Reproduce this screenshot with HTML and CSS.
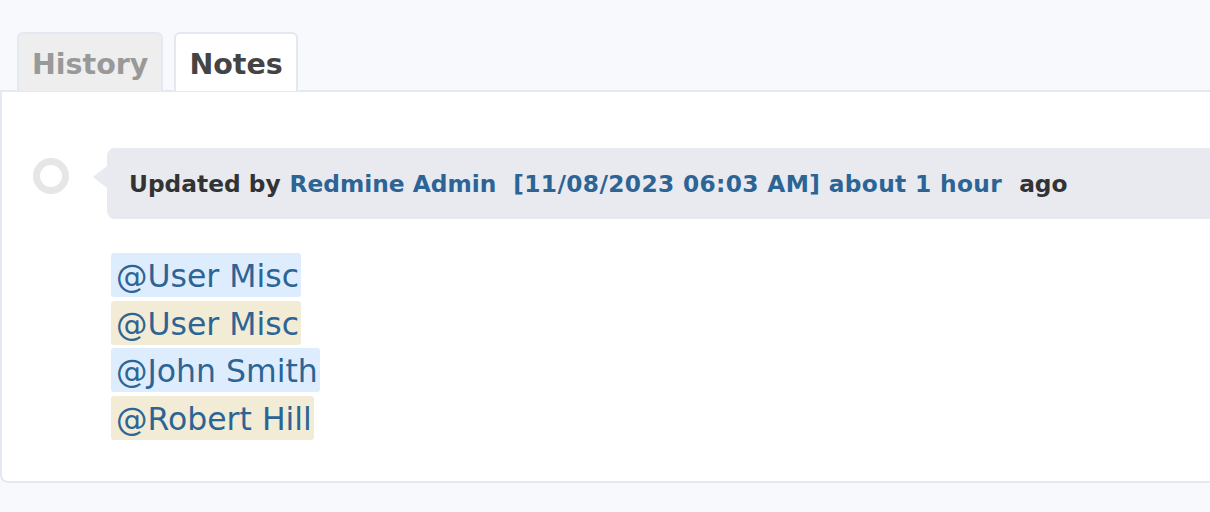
FILE: index.html
```html
<!DOCTYPE html>
<html>
<head>
<meta charset="utf-8">
<link rel="stylesheet" href="styles.css">
</head>
<body>
<div class="page">
  <ul class="tabs">
    <li class="tab">History</li>
    <li class="tab selected">Notes</li>
  </ul>
  <div class="panel">
    <div class="journal">
      <div class="dot"></div>
      <div class="bubble">
        <span class="by">Updated by</span>
        <a class="link">Redmine Admin</a>
        <a class="link gap date">[11/08/2023 06:03 AM] about 1 hour</a>
        <span class="by gap">ago</span>
      </div>
    </div>
    <div class="notes">
      <span class="mention blue">@User Misc</span>
      <span class="mention beige">@User Misc</span>
      <span class="mention blue">@John Smith</span>
      <span class="mention beige">@Robert Hill</span>
    </div>
  </div>
</div>
</body>
</html>
```
FILE: styles.css
```css
html, body {
  margin: 0;
  padding: 0;
  background: #f8f9fc;
  font-family: "DejaVu Sans", Verdana, sans-serif;
}
.page {
  padding-top: 32px;
  width: 1240px;
}
.tabs {
  list-style: none;
  margin: 0;
  padding: 0 0 0 17px;
  display: flex;
  gap: 11px;
  height: 58px;
  position: relative;
  z-index: 1;
}
.tab {
  box-sizing: border-box;
  height: 59px;
  padding: 3px 13px 0 13px;
  display: flex;
  align-items: center;
  font-weight: bold;
  font-size: 28.5px;
  color: #999;
  background: #eeeeee;
  border: 2px solid #e3e8f1;
  border-bottom: none;
  border-radius: 6px 6px 0 0;
}
.tab.selected {
  background: #fff;
  color: #444;
}
.panel {
  background: #fff;
  border: 2px solid #e3e8f1;
  border-right: none;
  border-radius: 0 0 0 8px;
  height: 393px;
  box-sizing: border-box;
  padding-top: 56px;
}
.journal {
  display: flex;
  align-items: flex-start;
}
.dot {
  width: 22px;
  height: 22px;
  border: 7px solid #e6e6e6;
  border-radius: 50%;
  margin: 10px 38px 0 31px;
}
.bubble {
  position: relative;
  flex: 1;
  height: 71px;
  background: #e8eaf0;
  border-radius: 8px 0 0 8px;
  display: flex;
  align-items: center;
  padding-left: 22px;
  font-size: 23.3px;
  font-weight: bold;
  white-space: pre;
}
.bubble::before {
  content: "";
  position: absolute;
  left: -14px;
  top: 18px;
  border-style: solid;
  border-width: 11px 14px 11px 0;
  border-color: transparent #e8eaf0 transparent transparent;
}
.by { color: #333; }
.link { color: #2c6495; margin-left: 9px; }
.gap { margin-left: 17px; }
.date { letter-spacing: 0.35px; }
.notes {
  display: flex;
  flex-direction: column;
  align-items: flex-start;
  padding: 34px 0 0 109px;
  gap: 3.5px;
}
.mention {
  font-size: 31.5px;
  height: 44px;
  line-height: 46px;
  color: #2c6495;
  padding: 0 2px 0 5px;
  border-radius: 3px;
}
.mention.blue { background: #deedfd; }
.mention.beige { background: #f2ecd6; }
```
